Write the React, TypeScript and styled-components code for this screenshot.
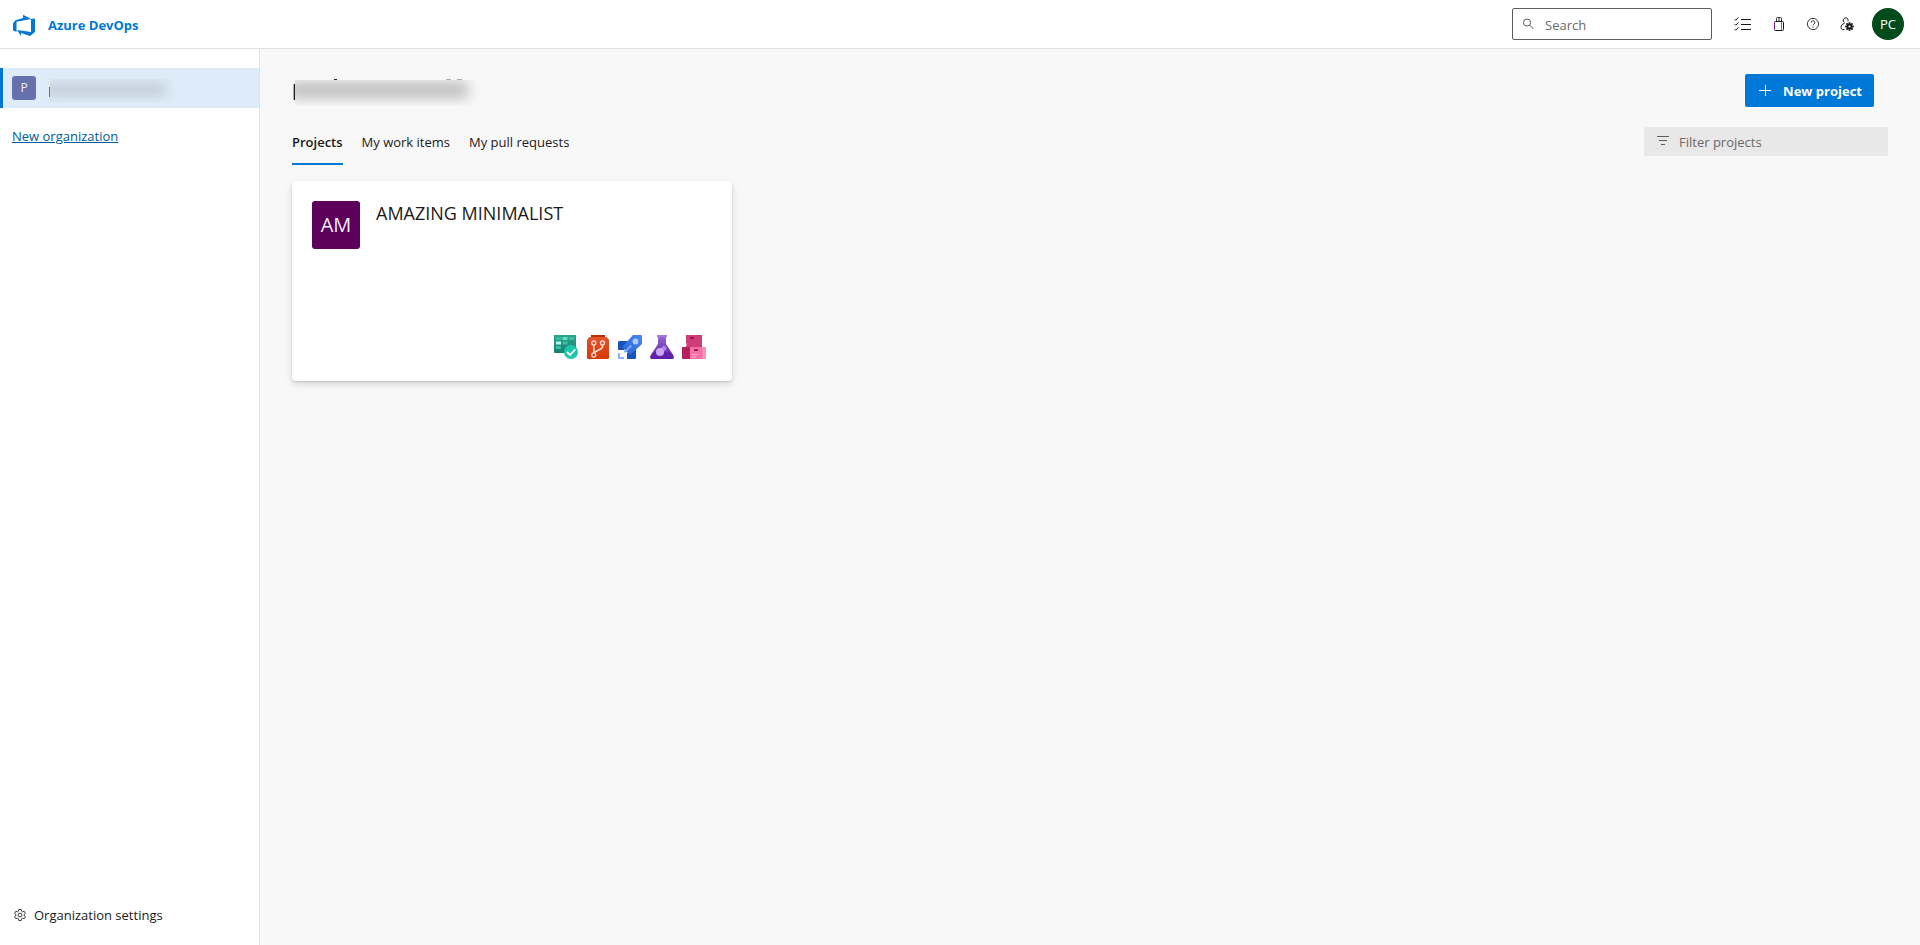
import React from "react";
import styled, { createGlobalStyle, css } from "styled-components";

const GlobalStyle = createGlobalStyle`
  *, *::before, *::after { box-sizing: border-box; }
  body {
    margin: 0;
    background: #f8f8f8;
    color: #1b1a19;
    font-family: "Open Sans", "Noto Sans", sans-serif;
    font-size: 13px;
    line-height: 20px;
  }
  button, input { font: inherit; color: inherit; }
  h1, h2, ul { margin: 0; padding: 0; }
  svg { display: block; flex: none; }
`;

const Page = styled.div`
  display: flex;
  flex-direction: column;
  min-height: 100vh;
`;

const Header = styled.header`
  display: flex;
  align-items: center;
  height: 49px;
  padding: 0 16px 0 12px;
  background: #fff;
  border-bottom: 1px solid #e1e1e1;
`;

const Brand = styled.a`
  display: flex;
  align-items: center;
  gap: 12px;
  margin-right: auto;
  padding-top: 1px;
  color: #0078d4;
  font-weight: 700;
  text-decoration: none;
`;

const SearchBox = styled.label`
  display: flex;
  align-items: center;
  gap: 10px;
  width: 200px;
  height: 32px;
  margin-right: 12px;
  padding: 0 9px;
  background: #fff;
  border: 1px solid #605e5c;
  border-radius: 2px;
`;

const TextInput = styled.input`
  flex: 1;
  min-width: 0;
  padding: 1px 0 0;
  border: 0;
  outline: 0;
  background: transparent;
  &::placeholder { color: #6b6967; opacity: 1; }
`;

const IconButton = styled.button<{ $wide?: boolean }>`
  display: flex;
  align-items: center;
  justify-content: center;
  width: ${(p) => (p.$wide ? 38 : 34)}px;
  height: 32px;
  padding: 0;
  border: 0;
  background: transparent;
  cursor: pointer;
`;

const UserAvatar = styled.button`
  width: 32px;
  height: 32px;
  margin-left: 8px;
  padding: 0;
  border: 0;
  border-radius: 50%;
  background: #004b1c;
  color: #fff;
  cursor: pointer;
`;

const Body = styled.div`
  display: flex;
  flex: 1;
`;

const Sidebar = styled.nav`
  display: flex;
  flex-direction: column;
  flex: none;
  width: 260px;
  padding-top: 19px;
  background: #fff;
  border-right: 1px solid #e1e1e1;
`;

const Organization = styled.a`
  display: flex;
  align-items: center;
  gap: 13px;
  height: 40px;
  padding-left: 9px;
  border-left: 3px solid #0078d4;
  border-radius: 0 2px 2px 0;
  background: #deecf9;
  text-decoration: none;
`;

const Initials = styled.span<{ $large?: boolean }>`
  display: flex;
  align-items: center;
  justify-content: center;
  flex: none;
  ${(p) =>
    p.$large
      ? css`width: 48px; height: 48px; background: #5c005c; font-size: 20px;`
      : css`width: 24px; height: 24px; background: #6570ad; font-size: 12px;`}
  border-radius: 3px;
  color: #f3eef6;
`;

const NewOrganization = styled.a`
  align-self: flex-start;
  margin: 18px 12px;
  color: #005a9e;
`;

const SettingsLink = styled.a`
  display: flex;
  align-items: center;
  gap: 8px;
  margin-top: auto;
  padding: 0 14px 20px;
  color: #1b1a19;
  text-decoration: none;
`;

const Main = styled.main`
  flex: 1;
  min-width: 0;
  padding: 25px 32px 32px;
`;

const TitleRow = styled.div`
  display: flex;
  align-items: center;
  justify-content: space-between;
  height: 33px;
  padding-right: 14px;
`;

const NewProject = styled.button`
  display: flex;
  align-items: center;
  gap: 12px;
  height: 33px;
  padding: 0 12px 0 14px;
  border: 0;
  border-radius: 2px;
  background: #0078d7;
  color: #fff;
  font-weight: 700;
  cursor: pointer;
`;

const TabRow = styled.div`
  display: flex;
  align-items: flex-start;
  justify-content: space-between;
  margin-top: 20px;
`;

const Tabs = styled.div`
  display: flex;
  gap: 19px;
`;

const Tab = styled.button<{ $active?: boolean }>`
  height: 38px;
  padding: 0 0 6px;
  border: 0;
  border-bottom: 2px solid ${(p) => (p.$active ? "#0078d4" : "transparent")};
  background: transparent;
  font-weight: ${(p) => (p.$active ? 600 : 400)};
  cursor: pointer;
`;

const Filter = styled.label`
  display: flex;
  align-items: center;
  gap: 9px;
  width: 244px;
  height: 29px;
  padding: 0 13px;
  border-radius: 2px;
  background: #e8e8e8;
`;

const Projects = styled.ul`
  display: flex;
  flex-wrap: wrap;
  gap: 16px;
  margin-top: 16px;
  list-style: none;
`;

const Card = styled.li`
  display: flex;
  flex-direction: column;
  justify-content: space-between;
  width: 440px;
  height: 200px;
  padding: 20px 26px 22px 20px;
  border-radius: 4px;
  background: #fff;
  box-shadow: 0 3px 7px rgba(0, 0, 0, 0.14), 0 1px 2px rgba(0, 0, 0, 0.12);
`;

const CardHead = styled.div`
  display: flex;
  gap: 16px;
`;

const CardTitle = styled.h2`
  font-size: 18px;
  font-weight: 500;
  line-height: 24px;
`;

const Services = styled.div`
  display: flex;
  justify-content: flex-end;
  gap: 8px;
`;

const ServiceLink = styled.a`
  display: block;
`;

function ObscuredOrgName() {
  return (
    <svg width="126" height="30" viewBox="0 0 126 30" role="img" aria-label="Organization name">
      <defs>
        <filter id="soft-small" x="-20%" y="-100%" width="140%" height="300%">
          <feGaussianBlur stdDeviation="6" />
        </filter>
        <clipPath id="org-clip">
          <rect x="1" y="6" width="125" height="23" />
        </clipPath>
      </defs>
      <rect x="1" y="6" width="125" height="23" fill="#dae8f4" opacity="0.5" />
      <g clipPath="url(#org-clip)">
        <rect x="-4" y="11" width="120" height="11" fill="#bec9d4" filter="url(#soft-small)" />
      </g>
      <rect y="14" width="1" height="10" fill="#9a6a28" />
    </svg>
  );
}

function ObscuredTitle() {
  return (
    <svg width="188" height="30" viewBox="0 0 188 30" role="img" aria-label="Organization name">
      <defs>
        <filter id="soft-large" x="-20%" y="-100%" width="140%" height="300%">
          <feGaussianBlur stdDeviation="7" />
        </filter>
        <clipPath id="title-clip">
          <rect x="3" y="4" width="185" height="26" />
        </clipPath>
      </defs>
      <g clipPath="url(#title-clip)">
        <rect x="-4" y="6" width="180" height="16" fill="#bcbcbc" filter="url(#soft-large)" />
      </g>
      <path d="M1.500 8V24" stroke="#d9a05b" />
      <path d="M2.500 8V24" stroke="#222" />
      <path d="M42 3.500h3" stroke="#222" />
      <path d="M154 3.500h5M165 3.500h5" stroke="#aaa" />
    </svg>
  );
}

function LogoIcon() {
  return (
    <svg width="24" height="24" viewBox="0 0 24 24" aria-hidden="true">
      <path
        fill="#0078d4"
        d="M23 5.500V19l-5 4-9-3v3l-4-6 14 2V6zM19.200 6L11 1.700V5L3.500 7.200 1 10.200v7.300l3.500 1.600V8.700z"
      />
    </svg>
  );
}

function SearchIcon() {
  return (
    <svg width="13" height="13" viewBox="0 0 13 13" fill="none" stroke="#605e5c" aria-hidden="true">
      <circle cx="5" cy="4.500" r="3.500" />
      <path d="M7.500 7L11.500 11" />
    </svg>
  );
}

function TasksIcon() {
  return (
    <svg width="18" height="16" viewBox="0 0 18 16" fill="none" stroke="#1b1a19" aria-hidden="true">
      <path d="M7 3.500h10M7 8.500h10M7 13.500h10" />
      <path d="M.5 3l1.300 1.300L4.500 1.200M.5 8l1.300 1.300L4.500 6.200M.5 13l1.300 1.300L4.500 11.200" strokeWidth=".9" />
    </svg>
  );
}

function BagIcon() {
  return (
    <svg width="14" height="16" viewBox="0 0 14 16" fill="none" stroke="#1b1a19" aria-hidden="true">
      <rect x="2.500" y="5.500" width="9" height="9" rx="1" />
      <path d="M4.500 5.500V2.500q0-1 1-1h3q1 0 1 1v3M7 2v3.500" strokeWidth=".9" />
      <path d="M9.500 6v8" strokeWidth=".6" />
      <path d="M2.500 6.500v7" stroke="#8a1a8a" />
    </svg>
  );
}

function HelpIcon() {
  return (
    <svg width="14" height="14" viewBox="0 0 14 14" fill="none" stroke="#3b3a39" aria-hidden="true">
      <circle cx="7" cy="7" r="5.600" />
      <path d="M5.200 5.600a1.800 1.800 0 1 1 2.700 1.500Q7 7.600 7 8.500M7 9.600v1.100" />
    </svg>
  );
}

function UserSettingsIcon() {
  const teeth = [0, 45, 90, 135];
  return (
    <svg width="14" height="14" viewBox="0 0 14 14" fill="none" stroke="#1b1a19" aria-hidden="true">
      <path d="M4.300 5.500A2.500 2.500 0 1 1 8 4.300M4.500 6.500C2.300 6.800 1 8.500 1 10.500q0 1.500 1.500 2h2" />
      {teeth.map((angle) => (
        <path key={angle} d="M9.500 5.200v8.600" strokeWidth="1.800" transform={`rotate(${angle} 9.500 9.500)`} />
      ))}
      <circle cx="9.500" cy="9.500" r="2.900" fill="#1b1a19" stroke="none" />
      <circle cx="9.500" cy="9.500" r="1.100" fill="#fff" stroke="none" />
    </svg>
  );
}

function PlusIcon() {
  return (
    <svg width="12" height="12" viewBox="0 0 12 12" stroke="#fff" aria-hidden="true">
      <path d="M0 5.500h12M6.500 0v11" />
    </svg>
  );
}

function FilterIcon() {
  return (
    <svg width="13" height="12" viewBox="0 0 13 12" stroke="#605e5c" aria-hidden="true">
      <path d="M0 .500h12M2 4.500h8M4 8.500h4" />
    </svg>
  );
}

function GearIcon() {
  return (
    <svg width="12" height="12" viewBox="0 0 12 12" fill="none" stroke="#3b3a39" aria-hidden="true">
      <path d="M4.800.5h2.400l.3 1.700 1 .6 1.600-.6 1.300 2.100-1.300 1.100v1.200l1.300 1.100-1.300 2.100-1.600-.6-1 .6-.3 1.700H4.800l-.3-1.700-1-.6-1.600.6L.6 7.700l1.300-1.100V5.400L.6 4.300l1.300-2.100 1.600.6 1-.6z" />
      <circle cx="6" cy="6" r="1.900" />
    </svg>
  );
}

function BoardsIcon() {
  return (
    <svg width="24" height="24" viewBox="0 0 24 24" aria-hidden="true">
      <defs>
        <linearGradient id="boards" x1="0" x2="0" y1="0" y2="1">
          <stop offset="0" stopColor="#2fa28c" />
          <stop offset="1" stopColor="#178170" />
        </linearGradient>
      </defs>
      <path d="M0 0h22v18H1q-1 0-1-1z" fill="url(#boards)" />
      <path d="M2 2h5v3H2zM15 2h5v3h-5zM8.500 6.500h5v3h-5zM2 11h5v3H2z" fill="#36c0a0" />
      <path d="M8.500 2h5v3h-5z" fill="#62e0c6" />
      <path d="M2 6.500h5v3H2z" fill="#b5f7e7" />
      <circle cx="17" cy="17" r="7" fill="#1bc7a8" />
      <path d="M13 17l3 3 5.300-5.500" fill="none" stroke="#fff" strokeWidth="1.800" />
    </svg>
  );
}

function ReposIcon() {
  return (
    <svg width="24" height="24" viewBox="0 0 24 24" aria-hidden="true">
      <defs>
        <linearGradient id="repos" x1="0" x2="0" y1="0" y2="1">
          <stop offset="0" stopColor="#e25330" />
          <stop offset="1" stopColor="#d63a02" />
        </linearGradient>
      </defs>
      <path d="M5 0h14v4H5z" fill="#b92f00" />
      <path d="M3.500 2h17L23 4.500V23q0 1-1 1H2q-1 0-1-1V4.500z" fill="url(#repos)" />
      <g fill="none" stroke="#fbd8ca" strokeWidth="1.300">
        <circle cx="7.800" cy="8" r="2" />
        <circle cx="16.500" cy="8" r="2" />
        <circle cx="7.800" cy="20" r="2" />
        <path d="M7.800 10v8M16.500 10v2q0 1-1.500 1.800L8 17.500" strokeWidth="1.600" />
      </g>
    </svg>
  );
}

function PipelinesIcon() {
  return (
    <svg width="24" height="24" viewBox="0 0 24 24" aria-hidden="true">
      <defs>
        <linearGradient id="pipelines" x1="1" x2="0" y1="0" y2="1">
          <stop offset="0" stopColor="#4e86ef" />
          <stop offset="1" stopColor="#2467d5" />
        </linearGradient>
      </defs>
      <path d="M10 6H1Q0 6 0 7v8h6zM18 13v10q0 1-1 1H9v-6z" fill="#1c52be" />
      <path d="M15 0h8q1 0 1 1v8l-12 11-8-8z" fill="url(#pipelines)" />
      <circle cx="17.500" cy="6.500" r="2.900" fill="#abc8fa" />
      <path d="M6 17.500l7.500-7" stroke="#78a4f0" strokeWidth="2" />
      <path d="M2 15.500l3 .5 4 4-.5 2-2-1-1-2-2-1z" fill="#fff" />
      <path d="M0 18h2v4h4v2H0z" fill="#8fb2f5" />
    </svg>
  );
}

function TestPlansIcon() {
  return (
    <svg width="24" height="24" viewBox="0 0 24 24" aria-hidden="true">
      <defs>
        <linearGradient id="tests" x1="0" x2="0" y1="0" y2="1">
          <stop offset="0" stopColor="#9b6bd7" />
          <stop offset="1" stopColor="#5b1b9f" />
        </linearGradient>
      </defs>
      <path d="M7 0h10v2h-1v7l7.500 11.500Q25 24 21 24H3Q-1 24 .5 20.500L8 9V2H7z" fill="url(#tests)" />
      <path d="M4.300 17h15.400l2 4q.5 1.800-1 1.800H3.300q-1.500 0-1-1.800z" fill="#6320ab" />
      <path d="M7 0h10v2H7z" fill="#a579df" />
      <circle cx="14" cy="13.500" r="2.400" fill="#b285e8" />
      <circle cx="10" cy="17" r="4" fill="#cba8f5" />
    </svg>
  );
}

function ArtifactsIcon() {
  return (
    <svg width="24" height="24" viewBox="0 0 24 24" aria-hidden="true">
      <path d="M4 0h16v12H4z" fill="#cf3d78" />
      <path d="M8 2h4v2H8z" fill="#98154c" />
      <path d="M4 8h1v3H4z" fill="#e792b8" />
      <path d="M0 12h9v12H1q-1 0-1-1z" fill="#b81e5b" />
      <path d="M8 12h16v11q0 1-1 1H8z" fill="#ef71a5" />
      <path d="M20.500 12H24v11q0 1-1 1h-2.500z" fill="#f793bd" />
      <path d="M12 14h4v2h-4zM3.500 14H7v2H3.500z" fill="#a61c58" />
      <path d="M10 19.500h6M10 22h4" stroke="#f9a8ca" />
    </svg>
  );
}

const services = [
  { name: "Boards", Icon: BoardsIcon },
  { name: "Repos", Icon: ReposIcon },
  { name: "Pipelines", Icon: PipelinesIcon },
  { name: "Test Plans", Icon: TestPlansIcon },
  { name: "Artifacts", Icon: ArtifactsIcon },
];

export default function App() {
  return (
    <Page>
      <GlobalStyle />
      <Header>
        <Brand href="#">
          <LogoIcon />
          Azure DevOps
        </Brand>
        <SearchBox>
          <SearchIcon />
          <TextInput type="search" placeholder="Search" aria-label="Search" />
        </SearchBox>
        <IconButton $wide aria-label="Work items"><TasksIcon /></IconButton>
        <IconButton aria-label="Marketplace"><BagIcon /></IconButton>
        <IconButton aria-label="Help"><HelpIcon /></IconButton>
        <IconButton aria-label="User settings"><UserSettingsIcon /></IconButton>
        <UserAvatar aria-label="Account">PC</UserAvatar>
      </Header>
      <Body>
        <Sidebar aria-label="Organizations">
          <Organization href="#" aria-current="page">
            <Initials>P</Initials>
            <ObscuredOrgName />
          </Organization>
          <NewOrganization href="#">New organization</NewOrganization>
          <SettingsLink href="#">
            <GearIcon />
            Organization settings
          </SettingsLink>
        </Sidebar>
        <Main>
          <TitleRow>
            <h1><ObscuredTitle /></h1>
            <NewProject>
              <PlusIcon />
              New project
            </NewProject>
          </TitleRow>
          <TabRow>
            <Tabs role="tablist">
              <Tab role="tab" aria-selected="true" $active>Projects</Tab>
              <Tab role="tab" aria-selected="false">My work items</Tab>
              <Tab role="tab" aria-selected="false">My pull requests</Tab>
            </Tabs>
            <Filter>
              <FilterIcon />
              <TextInput type="text" placeholder="Filter projects" aria-label="Filter projects" />
            </Filter>
          </TabRow>
          <Projects>
            <Card>
              <CardHead>
                <Initials $large>AM</Initials>
                <CardTitle>AMAZING MINIMALIST</CardTitle>
              </CardHead>
              <Services>
                {services.map(({ name, Icon }) => (
                  <ServiceLink key={name} href="#" aria-label={name}>
                    <Icon />
                  </ServiceLink>
                ))}
              </Services>
            </Card>
          </Projects>
        </Main>
      </Body>
    </Page>
  );
}
